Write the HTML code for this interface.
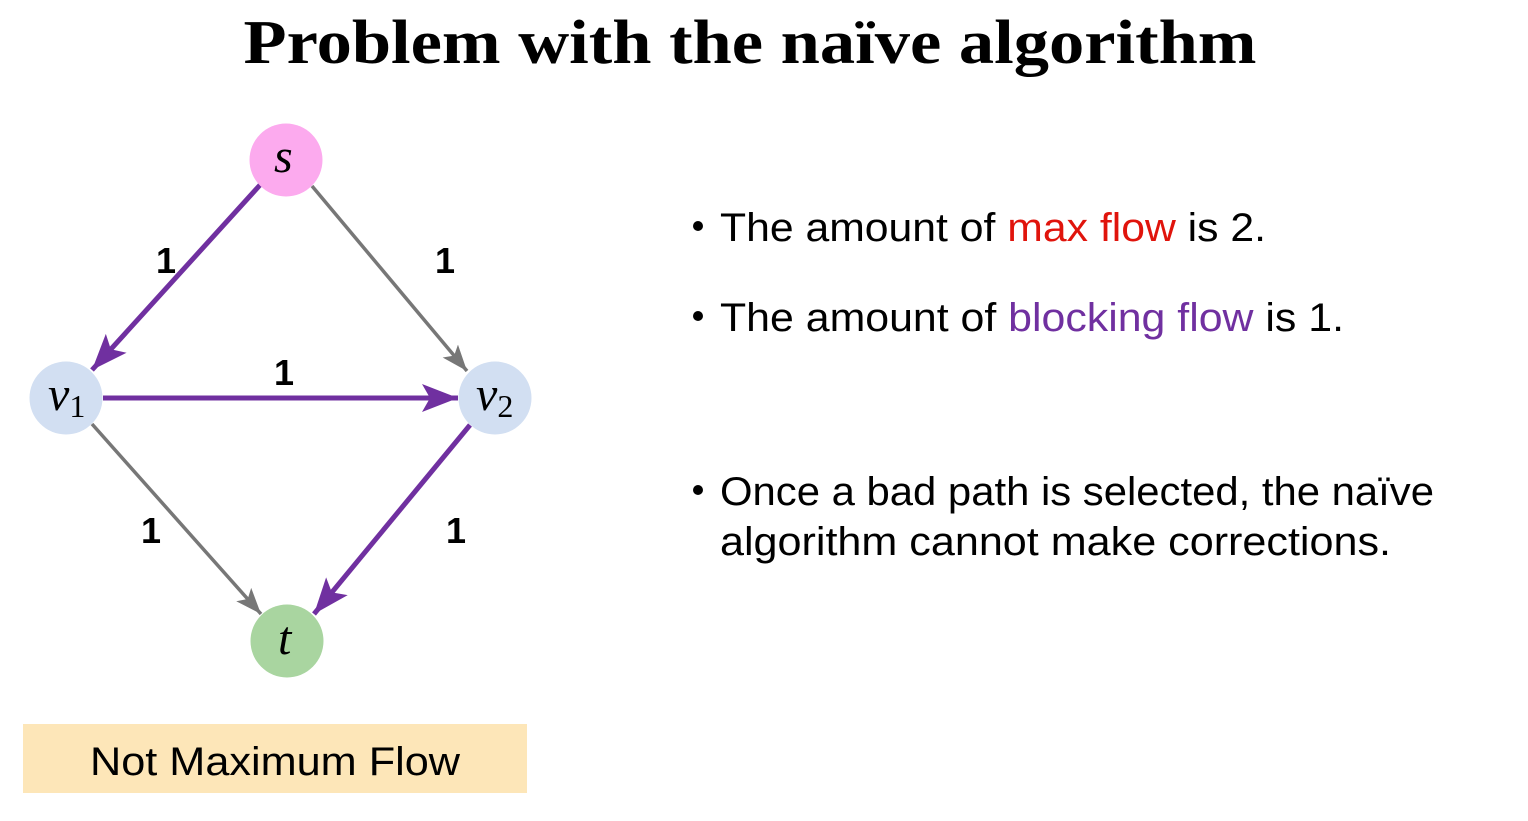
<!DOCTYPE html>
<html><head><meta charset="utf-8"><style>
html,body{margin:0;padding:0;background:#fff;}
svg{display:block;}
</style></head><body>
<svg width="1528" height="821" viewBox="0 0 1528 821" xmlns="http://www.w3.org/2000/svg">
<defs>
<marker id="ap" markerUnits="userSpaceOnUse" markerWidth="40" markerHeight="40" refX="36" refY="14" orient="auto" viewBox="0 0 40 28">
<path d="M36 14 L0 0 L8 14 L0 28 Z" fill="#7030a0"/></marker>
<marker id="ag" markerUnits="userSpaceOnUse" markerWidth="30" markerHeight="30" refX="26" refY="10" orient="auto" viewBox="0 0 30 20">
<path d="M26 10 L0 0 L6 10 L0 20 Z" fill="#777"/></marker>
</defs>
<text x="750" y="63" text-anchor="middle" font-family="Liberation Serif, serif" font-weight="bold" font-size="62" textLength="1013" lengthAdjust="spacingAndGlyphs" fill="#000">Problem with the naïve algorithm</text>

<line x1="260" y1="185" x2="92" y2="370" stroke="#7030a0" stroke-width="5" marker-end="url(#ap)"/>
<line x1="312" y1="186" x2="467" y2="371" stroke="#777" stroke-width="3.5" marker-end="url(#ag)"/>
<line x1="103" y1="398" x2="458" y2="398" stroke="#7030a0" stroke-width="5" marker-end="url(#ap)"/>
<line x1="92" y1="424" x2="261" y2="614" stroke="#777" stroke-width="3.5" marker-end="url(#ag)"/>
<line x1="470" y1="425" x2="314" y2="614" stroke="#7030a0" stroke-width="5" marker-end="url(#ap)"/>

<circle cx="286" cy="160" r="36.5" fill="#fcaaee"/>
<circle cx="66" cy="398" r="36.5" fill="#d2dff2"/>
<circle cx="495" cy="398" r="36.5" fill="#d2dff2"/>
<circle cx="287" cy="641" r="36.5" fill="#a9d5a0"/>

<g font-family="Liberation Serif, serif" font-style="italic" font-size="48" fill="#000">
<text x="274" y="172">s</text>
<text x="48" y="410">v<tspan font-style="normal" font-size="32" dy="7">1</tspan></text>
<text x="476" y="410">v<tspan font-style="normal" font-size="32" dy="7">2</tspan></text>
<text x="278" y="654">t</text>
</g>

<g font-family="Liberation Sans, sans-serif" font-weight="bold" font-size="36" fill="#000" text-anchor="middle">
<text x="166" y="273">1</text>
<text x="445" y="273">1</text>
<text x="284" y="385">1</text>
<text x="151" y="543">1</text>
<text x="456" y="543">1</text>
</g>

<rect x="23" y="724" width="504" height="69" fill="#fde6b8"/>
<text x="275" y="775" text-anchor="middle" font-family="Liberation Sans, sans-serif" font-size="40" textLength="370" lengthAdjust="spacingAndGlyphs" fill="#000">Not Maximum Flow</text>

<g font-family="Liberation Sans, sans-serif" font-size="40" fill="#000">
<circle cx="698" cy="226" r="5"/>
<text x="720" y="241" textLength="546" lengthAdjust="spacingAndGlyphs">The amount of <tspan fill="#e0140c">max flow</tspan> is 2.</text>
<circle cx="698" cy="316" r="5"/>
<text x="720" y="331" textLength="624" lengthAdjust="spacingAndGlyphs">The amount of <tspan fill="#7030a0">blocking flow</tspan> is 1.</text>
<circle cx="698" cy="490" r="5"/>
<text x="720" y="505" textLength="714" lengthAdjust="spacingAndGlyphs">Once a bad path is selected, the naïve</text>
<text x="720" y="555" textLength="671" lengthAdjust="spacingAndGlyphs">algorithm cannot make corrections.</text>
</g>
</svg>
</body></html>
